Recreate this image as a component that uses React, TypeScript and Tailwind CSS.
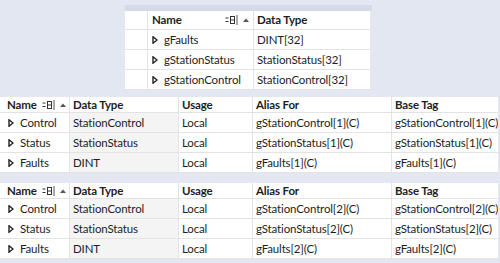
const font = { fontFamily: 'Lato, "Noto Sans", sans-serif' };

const SortIcon = () => (
  <span className="flex items-center gap-[5px]">
    <svg width="13" height="10" viewBox="0 0 13 10">
      <line x1="0.5" y1="3" x2="3.5" y2="3" stroke="#333" />
      <line x1="0.5" y1="6.5" x2="3.5" y2="6.5" stroke="#333" />
      <rect x="5.5" y="1.5" width="4" height="7" fill="none" stroke="#333" />
      <line x1="5.5" y1="5" x2="9.5" y2="5" stroke="#333" />
      <line x1="12" y1="0" x2="12" y2="10" stroke="#555" />
    </svg>
    <svg width="6" height="4" viewBox="0 0 6 4">
      <polygon points="0,4 3,0.5 6,4" fill="#555" />
    </svg>
  </span>
);

const Expander = () => (
  <svg width="6" height="8" viewBox="0 0 6 8" className="shrink-0">
    <polygon points="1,0.8 5,4 1,7.2" fill="#fff" stroke="#222" strokeWidth="1.4" />
  </svg>
);

const topRows = [
  ["gFaults", "DINT[32]"],
  ["gStationStatus", "StationStatus[32]"],
  ["gStationControl", "StationControl[32]"],
];

const aliasRows = (n: number) => [
  ["Control", "StationControl", "Local", `gStationControl[${n}](C)`, `gStationControl[${n}](C)`],
  ["Status", "StationStatus", "Local", `gStationStatus[${n}](C)`, `gStationStatus[${n}](C)`],
  ["Faults", "DINT", "Local", `gFaults[${n}](C)`, `gFaults[${n}](C)`],
];

const cols = ["w-[70px]", "w-[109px]", "w-[74px]", "w-[139px]", "w-[106px]"];
const cell = "h-full flex items-center whitespace-nowrap overflow-hidden";

const AliasTable = ({ n }: { n: number }) => (
  <div className="w-[498px] bg-white text-[11.5px] tracking-[-0.15px] text-[#1e1e1e]">
    <div className="flex h-[16px] items-center border-b border-[#e3e3e3] font-bold">
      <div className={`${cols[0]} ${cell} justify-between pl-[7px] pr-[3px] border-r border-[#e3e3e3]`}>
        <span>Name</span>
        <SortIcon />
      </div>
      <div className={`${cols[1]} ${cell} pl-[3px] border-r border-[#e3e3e3]`}>Data Type</div>
      <div className={`${cols[2]} ${cell} pl-[3px] border-r border-[#e3e3e3]`}>Usage</div>
      <div className={`${cols[3]} ${cell} pl-[3px] border-r border-[#e3e3e3]`}>Alias For</div>
      <div className={`${cols[4]} ${cell} pl-[3px]`}>Base Tag</div>
    </div>
    {aliasRows(n).map((r) => (
      <div key={r[0]} className="flex h-[20px] items-center border-b border-[#e3e3e3]">
        <div className={`${cols[0]} ${cell} gap-[6px] pl-[8px] border-r border-[#e3e3e3]`}>
          <Expander />
          <span>{r[0]}</span>
        </div>
        <div className={`${cols[1]} ${cell} pl-[3px] border-r border-[#e3e3e3] bg-[#f4f4f4]`}>{r[1]}</div>
        <div className={`${cols[2]} ${cell} pl-[3px] border-r border-[#e3e3e3]`}>{r[2]}</div>
        <div className={`${cols[3]} ${cell} pl-[3px] border-r border-[#e3e3e3]`}>{r[3]}</div>
        <div className={`${cols[4]} ${cell} pl-[3px]`}>{r[4]}</div>
      </div>
    ))}
  </div>
);

export default function App() {
  return (
    <div className="w-[500px] h-[263px] overflow-hidden bg-[#e3e7f1] flex flex-col" style={font}>
      <div className="ml-[125px] mt-[5px] w-[247px]">
        <div className="h-[6px] bg-[#d5d9e8]" />
        <div className="bg-white text-[11.5px] tracking-[-0.15px] text-[#1e1e1e] border-r-2 border-[#e8e8e8]">
          <div className="flex h-[19px] items-center border-b border-[#e3e3e3] font-bold">
            <div className="w-[23px] h-full border-r border-[#e3e3e3]" />
            <div className={`w-[106px] ${cell} justify-between pl-[4px] pr-[4px] border-r border-[#e3e3e3]`}>
              <span>Name</span>
              <SortIcon />
            </div>
            <div className={`w-[116px] ${cell} pl-[3px]`}>Data Type</div>
          </div>
          {topRows.map((r) => (
            <div key={r[0]} className="flex h-[20px] items-center border-b border-[#e3e3e3]">
              <div className="w-[23px] h-full border-r border-[#e3e3e3]" />
              <div className={`w-[106px] ${cell} gap-[6px] pl-[4px] border-r border-[#e3e3e3]`}>
                <Expander />
                <span>{r[0]}</span>
              </div>
              <div className={`w-[116px] ${cell} pl-[3px]`}>{r[1]}</div>
            </div>
          ))}
        </div>
      </div>
      <div className="mt-[7px]">
        <AliasTable n={1} />
      </div>
      <div className="mt-[10px]">
        <AliasTable n={2} />
      </div>
    </div>
  );
}
